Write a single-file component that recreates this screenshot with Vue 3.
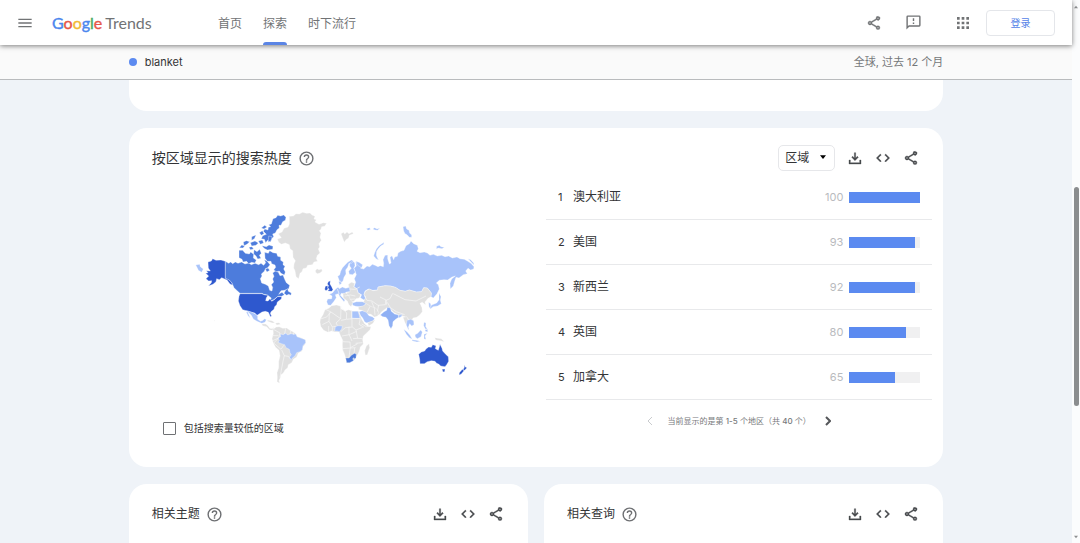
<script setup>
import { ref } from 'vue'

const icons = {
  share: 'M18 16.08c-.76 0-1.44.3-1.96.77L8.91 12.7c.05-.23.09-.46.09-.7s-.04-.47-.09-.7l7.05-4.11A3 3 0 1 0 15 5c0 .24.04.47.09.7L8.04 9.81A3 3 0 1 0 8.04 14.19l7.12 4.16c-.05.21-.08.43-.08.65a2.92 2.92 0 1 0 2.92-2.92zM18 4a1 1 0 1 1 0 2 1 1 0 0 1 0-2zM6 13a1 1 0 1 1 0-2 1 1 0 0 1 0 2zm12 7.02a1 1 0 1 1 0-2 1 1 0 0 1 0 2z',
  feedback: 'M20 2H4a2 2 0 0 0-2 2v18l4-4h14a2 2 0 0 0 2-2V4a2 2 0 0 0-2-2zm0 14H5.2L4 17.2V4h16zM11 12h2v2h-2zm0-6h2v4h-2z',
  apps: 'M3 7h4V3H3zm7 14h4v-4h-4zm-7 0h4v-4H3zm0-7h4v-4H3zm7 0h4v-4h-4zm7-11v4h4V3zm-7 4h4V3h-4zm7 7h4v-4h-4zm0 7h4v-4h-4z',
  menu: 'M2 18.500h20v-2H2zm0-5.500h20v-2H2zm0-7.500v2h20v-2z',
  download: 'M11 4h2v8l2.500-2.500L17 11l-5 5-5-5 1.500-1.500L11 12zM3 15h2v4h14v-4h2v6H3z',
  code: 'M9.400 16.600 4.800 12l4.600-4.600L8 6l-6 6 6 6zm5.200 0 4.600-4.600-4.600-4.600L16 6l6 6-6 6z',
  help: 'M11 18h2v-2h-2zm1-16a10 10 0 1 0 0 20 10 10 0 0 0 0-20zm0 18a8 8 0 1 1 0-16 8 8 0 0 1 0 16zm0-14a4 4 0 0 0-4 4h2a2 2 0 1 1 4 0c0 2-3 1.750-3 5h2c0-2.250 3-2.500 3-5a4 4 0 0 0-4-4z',
}
const nav = ['首页', '探索', '时下流行']
const actions = [
  ['download', '下载'],
  ['code', '嵌入'],
  ['share', '分享'],
]
const regions = [
  ['澳大利亚', 100],
  ['美国', 93],
  ['新西兰', 92],
  ['英国', 80],
  ['加拿大', 65],
]
const related = ['相关主题', '相关查询']
const lowVolume = ref(false)
const area = ref('区域')
</script>

<template>
  <div class="page">
    <div class="view">
      <header class="top">
        <button class="icon-btn" aria-label="菜单"><svg class="ic" viewBox="0 0 24 24"><path :d="icons.menu" /></svg></button>
        <a href="#" class="logo"><span class="google"><span class="b">G</span><span class="r">o</span><span class="y">o</span><span class="b">g</span><span class="g">l</span><span class="r">e</span></span><span>Trends</span></a>
        <nav>
          <a v-for="(n, i) in nav" :key="n" href="#" :class="{ active: i === 1 }">{{ n }}</a>
        </nav>
        <div class="tools">
          <button class="icon-btn" aria-label="分享"><svg class="ic bold" viewBox="0 0 24 24"><path :d="icons.share" /></svg></button>
          <button class="icon-btn" aria-label="反馈"><svg class="ic wide" viewBox="0 0 24 24"><path :d="icons.feedback" /></svg></button>
          <button class="icon-btn apps" aria-label="应用"><svg class="ic" viewBox="0 0 24 24"><path :d="icons.apps" /></svg></button>
          <button class="login">登录</button>
        </div>
      </header>
      <div class="sub">
        <div class="wrap sub-row">
          <span class="term"><i class="dot"></i>blanket</span>
          <span class="scope">全球, 过去 12 个月</span>
        </div>
      </div>
      <main class="wrap">
        <section class="card tail"></section>
        <section class="card geo">
          <div class="head">
            <h2 class="main-title">按区域显示的搜索热度</h2>
            <button class="icon-btn help" aria-label="帮助"><svg class="ic wide" viewBox="0 0 24 24"><path :d="icons.help" /></svg></button>
            <div class="actions">
              <label class="picker">
                <select v-model="area" aria-label="区域"><option>区域</option></select>
                <svg viewBox="0 0 8 5"><path d="M0 0h8L4 5z" /></svg>
              </label>
              <button v-for="a in actions" :key="a[0]" class="icon-btn" :aria-label="a[1]"><svg class="ic bold" viewBox="0 0 24 24"><path :d="icons[a[0]]" /></svg></button>
            </div>
          </div>
          <div class="body">
            <div class="left">
              <svg class="map" viewBox="0 0 870 570" role="img" aria-label="地图">
                <g class="land">
                  <path class="none" d="M298 49l12-1 8-7 10 1 10-5 12 3 10-1 6 6 9 4-3 8 7 2-4 7 12 7 13-5 10 2-6 9-9 1-2 8-5 4 5 8-3 12 4 9-7 10 2 10-4 6 5 12-8 7-3 10 4 8-11 2-5 8-14 2-4 8-10 2-3 9-6 5-4 16-8-6-3-18-4-8 1-12 4-10-7-10-1-20-8-6-2-12-12-5-12 4-8-6-4-10 12-4-9-12 11-5 6-11 12-4 4-9z" />
                  <path class="none" d="M376 212l5-6 6 3 8-2 2 6-7 6-8 2-5-4z" />
                  <path class="high" d="M54 186l10-3 4-7 10 5 15-1 13 4v50l10 4 8 8 5 10-9-4-9-12-16-7-7 6-8-3-2 9-9 8-14 5 9-10 1-6-9 1-8-7 8-8-9-8 7-2-5-6 12 1-6-9z" />
                  <path class="low" d="M17 195l12-2 2 7 9 7-5 10-10-6-3-7z" />
                  <path class="mid" d="M106 184L116 190 122 186 128 191 136 186 144 190 155 186 165 192 176 189 184 194 195 190 206 194 213 190 221 196 227 188 223 179 231 183 240 194 233 203 226 206 223 214 214 222 216 228 211 236 215 249 226 253 235 258 239 271 246 273 248 262 244 254 251 246 248 237 252 229 248 219 256 213 265 217 270 227 279 225 284 238 289 248 299 256 296 266 283 271 273 272 266 283 276 277 283 284 275 289 264 289 251 299 239 303 244 294 232 285 222 283 215 280H150L140 271 132 263 126 249 118 240 106 235z" />
                  <path class="mid" d="M282 280l5-9 6-5 2 8 9 5-1 7-7-3-6 3z" />
                  <path class="mid" d="M249 56L258 53 263 46 272 48 281 45 288 52 286 61 278 65 273 76 267 76 268 84 261 89 256 99 248 102 251 110 244 117 242 126 233 121 227 128 223 118 214 116 218 107 229 103 220 94 224 87 234 90 235 82 242 80 236 74 244 72z" />
                  <path class="mid" d="M224 157L235 160 239 152 249 158 260 160 263 169 272 171 272 181 280 186 279 194 285 199 281 207 286 216 283 225 273 220 268 213 260 215 251 210 257 202 255 195 245 191 243 184 232 184 225 175z" />
                  <path class="mid" d="M147 151l11 0 8 9 12 2 4-6 9 7-1 11 9 6-4 9-10-2-9 4-6-7-11 2-3-8-9-5zM192 149l9 6 8-7 5 12-6 6 5 9-10 2-5-9-7-6zM216 137l13 3 8-5 12 4-1 9-16 2-10-5zM160 126l9-4 10 3-8 8-9 4zM181 128l14-5 10 6-7 7-13 2zM185 110l13-5-5 11-8 5zM208 98l9-6 5 9-8 5zM205 123l12-3 4 9-10 4zM148 143l7-8 9 3-5 6zM177 142l9-2 5 7-10 2zM214 84l10-8 7 5-9 6zM236 108l10 2-2 11-9 6zM226 208l8-4 5 7-8 5z" />
                  <path class="high" d="M150 281H215L225 285 234 286 229 293 227 302 234 303 240 296 245 304 253 299 263 290 275 290 274 297 262 306 260 314 254 320 252 328 243 335 241 341 245 348 241 350 235 337 226 334 216 336 207 342 201 346 194 339 184 337 172 333 158 329 150 317 145 303 147 289z" />
                  <path class="low" d="M170 332L184 336 195 341 203 348 203 358 212 364 219 361 224 356 229 359 225 367 215 370 201 364 190 357 184 346zM172 334l4 9 5 12-7-8-5-10z" />
                  <path class="none" d="M215 371l12 1 7 5 5 8 8 1 5-5-4 10-10-2-8-9-12-3zM232 360l14 2 9 6-8 1-14-5zM256 369l11-1 5 5-12 2z" />
                  <path class="none" d="M249 388L259 381 268 380 278 385 290 384 300 391 309 395 317 401 319 409 335 414 347 421 346 431 339 440 336 453 325 459 320 471 310 478 305 488 295 494 293 503 285 510 280 519 273 524 271 533 267 541 269 550 261 545 262 533 261 518 266 503 266 484 270 468 267 451 256 441 249 427 246 416 250 401z" />
                  <path class="low" d="M263 414L272 410 271 402 280 404 287 399 293 405 303 401 313 403 318 402 321 410 332 414 346 419 347 428 339 437 337 449 330 455 320 458 315 468 307 474 304 480 297 474 304 464 300 458 298 448 288 443 284 434 274 431 264 427 268 421z" />
                  <path class="border" d="M252 389l18 10-4 15-18 8M266 414l-15 15 22 19 8-12M275 450l8 17-4 17-9 48M282 467l13 2 7 8M246 407l19 0M287 385l-3 17M302 393l-2 9M311 397l-1 7" />
                  <path class="none" d="M72 362l3-1-1 3z" />
                </g>
                <g class="land" transform="translate(360 0)">
                  <path class="none" d="M93 101l8-4 3 5 7-6 6 5 10-5 3 5-12 5-2 8-8 5-5 8-4-10z" />
                  <path class="low" d="M169 86l9-3 4 5-8 3zM188 87l6-4 7 4 9-3-7 7-8-1zM279 80L287 78 290 87 297 91 299 99 305 105 305 112 298 112 291 104 285 101 281 93zM222 127L221 133 212 138 205 146 200 154 199 166 202 173 206 180 199 177 191 168 194 158 199 147 207 137zM380 139l8-3 5 4 10 2-7 4-10-2-7 2zM474 176l8 3 9 10 1 6-9-9z" />
                  <path class="low" d="M132 205L139 198 137 186 144 190 155 197 152 205 161 207 171 198 179 200 187 193 195 196 204 200 211 197 220 200 221 190 219 179 225 166 233 165 233 176 238 192 243 189 240 172 246 167 251 179 254 171 262 169 264 159 272 154 282 151 288 137 298 131 303 123 311 131 322 136 325 146 321 154 330 158 343 156 352 159 360 166 370 163 382 168 395 166 405 170 416 168 427 174 441 171 450 176 463 178 472 183 483 190 492 200 491 207 482 210 474 205 467 213 472 221 460 224 447 234 438 232 434 244 430 258 421 267 420 250 425 237 436 228 426 231 413 240 402 239 388 241 379 249 385 254 388 267 381 281 370 294 363 290 364 279 352 264 341 263 335 275 319 276 298 270 286 274 270 271 256 262 241 258 225 257 204 261 203 270 188 271 175 267 165 273 162 283 168 296 162 300 151 293 155 284 144 278 141 267 132 260 137 247 133 236 139 224z" />
                  <path class="none" d="M115 253L124 247 134 250 131 260 141 267 144 278 152 284 148 294 138 296 132 304 121 307 114 297 107 290 111 279 108 268 117 265z" />
                  <path class="low" d="M83 229L89 225 92 214 97 204 105 195 113 187 124 180 131 183 125 190 117 190 113 202 107 210 108 222 102 232 99 243 93 248 88 242zM119 190L127 183 134 188 135 197 131 205 136 217 128 224 118 223 116 214 124 205 119 198zM137 184l10 3 11 7-3 9-12-7zM86 245l6-2 3 7-6 5z" />
                  <path class="low" d="M77 267L84 262 88 266 97 261 107 265 119 262 120 275 109 276 103 282 94 280 91 286 98 293 105 300 102 305 90 291 85 281 76 284 79 293 74 301 71 305 62 316 54 315 50 305 53 297 65 296 66 288 58 283 67 279z" />
                  <path class="none" d="M99 280l9-1 8 7 5 12 8 10-6 12-7-7-4-10-12-9z" />
                  <path class="high" d="M55 245l6-3-1 10 5 8 4 9-4 5-12-1 5-6-6-3 4-7-4-5zM46 259l7-2 1 10-6 5-4-4z" />
                  <path class="none" d="M163 301L167 291 162 283 167 273 178 267 189 272 203 270 204 261 225 257 241 258 256 262 270 271 286 274 298 270 319 276 335 275 341 263 352 264 364 279 363 290 354 295 345 306 347 315 337 307 330 310 336 323 337 335 329 345 320 352 309 354 305 364 297 359 289 352 279 349 264 344 250 337 239 324 229 325 215 335 207 345 194 347 180 336 168 334 160 324 150 318 157 312z" />
                  <path class="low" d="M127 309l12-4 18 0 10 5-4 8-14 2-12-1-9-3z" />
                  <path class="none" d="M145 321l14-3 10-7 13 8 15 5 9 11-3 13-10 3-10-8-13-2-14-10-10-2z" />
                  <path class="low" d="M147 335l10-3 12 5 8 10 10 3 7 6-6 8-17 5-7-3-6-12-7-8z" />
                  <path class="none" d="M173 368l12-4 10-5-6 11-13 8z" />
                  <path class="mid2" d="M211 345L222 335 230 331 232 322 241 324 244 334 254 342 264 344 267 351 257 358 249 365 248 377 243 386 237 377 234 360 228 352 218 350z" />
                  <path class="low" d="M265 346l12-3-3 7-8 4z" />
                  <path class="none" d="M279 352l11-2 7 11 11-1 4 10-6 7-4-9-7-1-2 14-8-13z" />
                  <path class="low" d="M291 361l11-3 9 4 1 12-7 4-6-7-4 11 3 10-5-7-4-10zM281 388l10 7 9 11 7 12-9-5-9-10zM306 419l13 2 12 3-10 2-15-4zM315 404l8-4 9-10 5 6-4 14-11 6-6-5zM342 403l10-3-7 8 3 10-6-1zM342 367l6 2-1 11 5 6-6 1-5-10zM345 389l8-1 0 8-7-2z" />
                  <path class="low" d="M387 279L393 290 391 301 394 311 383 318 369 320 362 326 358 323 365 315 380 309 387 299zM356 307l6 4 1 11-6 1z" />
                  <path class="none" d="M374 413l10 2 10 1 9 9-12-3-14-2z" />
                  <path class="high" d="M326 463L334 456 344 453 348 447 356 441 364 442 368 434 378 437 376 446 385 451 388 441 390 433 396 445 398 453 407 463 415 470 416 484 410 494 405 500 392 498 386 492 380 490 375 484 364 482 352 485 343 491 330 491 329 478zM396 508l9-1-1 8-5 1z" />
                  <path class="high" d="M463 494l3 7 5 2-7 8-5-1 4-8zM457 508l5 4-8 10-7 3 1-7z" />
                  <path class="none" d="M31 357L39 344 45 329 56 325 65 317 79 315 91 318 93 326 105 333 116 329 127 333 145 333 150 345 155 358 164 371 172 378 183 380 180 389 170 399 160 408 158 419 160 432 151 441 148 453 144 462 136 472 128 481 116 488 110 489 107 475 103 461 98 450 97 434 98 421 91 406 87 396 75 396 65 393 54 397 41 391 32 379 30 367z" />
                  <path class="none" d="M177 431l2 12-7 21-6 2-2-14 5-14z" />
                  <path class="low" d="M126 334h18l3 9 3 12h-24zM76 380l8-3 13 1-2 9-7 8-7-2-7 1z" />
                  <path class="mid" d="M107 474L117 474 124 466 134 460 139 463 138 473 129 483 119 488 110 488z" />
                  <path class="none" d="M128 476l4-3 2 5-4 2z" />
                  <path class="border" d="M45 327l18 9-13 15-19 6M63 336l29 20-14 13 4 7M93 318l-1 38M98 326l12 13-1 19-16 3M125 330v25l26 1M110 358l16-2v24l12 10 20-8M92 395l14-12 20-2M96 408l22-4 22-10M117 380v23l9 20M98 425l22 1 1 17 22-12M97 446l40-3M121 443l-4 28M137 430l20-2M138 390l5 25 15 1M151 356l-4 17 15 9M37 374l20-10 10 17 10-2M57 364l1-27M56 378v18M67 382v13M143 415l-14 1M134 444l-2 16M155 372l14 8 12-1" />
                  <path class="border" d="M248 280l-8 16-12 5 2 13M250 281l35 18 33 4 30-15M210 291l18 9-2 14-22 2-18-13-15-2-8-14M185 305l8 19 2 22M206 315l-4 20M180 319l-9 18M232 307l9 16 18 12 25 9M104 288l17-3 15 3M118 267l18 1 13-7M121 298l15-1M118 276l-8 2M82 267l5 13-8 9" />
                </g>
              </svg>
              <label class="check"><input v-model="lowVolume" type="checkbox" />包括搜索量较低的区域</label>
            </div>
            <div class="right">
              <ol>
                <li v-for="(r, i) in regions" :key="r[0]">
                  <span class="rank">{{ i + 1 }}</span><span class="name">{{ r[0] }}</span>
                  <span class="value">{{ r[1] }}</span>
                  <span class="bar"><i :style="{ width: r[1] + '%' }"></i></span>
                </li>
              </ol>
              <div class="pager">
                <button class="icon-btn" aria-label="上一页" disabled><svg viewBox="0 0 6 10"><path d="M5 1 1 5l4 4" /></svg></button>
                <span>当前显示的是第 <b>1-5</b> 个地区（共 <b>40</b> 个）</span>
                <button class="icon-btn" aria-label="下一页"><svg viewBox="0 0 6 10"><path d="m1 1 4 4-4 4" /></svg></button>
              </div>
            </div>
          </div>
        </section>
        <div class="pair">
          <section v-for="t in related" :key="t" class="card">
            <div class="head">
              <h2>{{ t }}</h2>
              <button class="icon-btn help" aria-label="帮助"><svg class="ic wide" viewBox="0 0 24 24"><path :d="icons.help" /></svg></button>
              <div class="actions">
                <button v-for="a in actions" :key="a[0]" class="icon-btn" :aria-label="a[1]"><svg class="ic bold" viewBox="0 0 24 24"><path :d="icons[a[0]]" /></svg></button>
              </div>
            </div>
          </section>
        </div>
      </main>
    </div>
    <div class="scroll" aria-hidden="true">
      <svg viewBox="0 0 6 4"><path d="M0 4h6L3 0z" /></svg>
      <div class="track"><i></i></div>
      <svg viewBox="0 0 6 4"><path d="M0 0h6L3 4z" /></svg>
    </div>
  </div>
</template>

<style>
body { margin: 0; overflow: hidden; }
</style>

<style scoped>
* { box-sizing: border-box; }
.page {
  display: flex;
  height: 100vh;
  overflow: hidden;
  background: #eff3f8;
  color: #333436;
  font: 12px/16px Inter, "Noto Sans CJK SC", sans-serif;
}
.view { flex: 1; min-width: 0; }
.icon-btn {
  display: inline-flex;
  align-items: center;
  justify-content: center;
  padding: 0;
  border: 0;
  background: none;
  color: inherit;
}
.ic { width: 16px; height: 16px; fill: currentColor; }
.bold { stroke: currentColor; stroke-width: 0.5; }
.wide { width: 17px; height: 17px; }
a { color: inherit; text-decoration: none; }
.top {
  position: relative;
  display: flex;
  align-items: center;
  height: 45px;
  padding: 0 17px;
  background: #fff;
  color: #717375;
  box-shadow: 0 1px 5px rgba(0, 0, 0, 0.5);
}
.logo {
  display: flex;
  gap: 3px;
  margin-left: 19px;
  width: 166px;
  font: 16px/20px Lato, sans-serif;
}
.google { -webkit-text-stroke: 0.4px; }
.b { color: #4b86ee; }
.r { color: #e65747; }
.y { color: #f2bb35; }
.g { color: #4aab62; }
nav { display: flex; gap: 21px; align-self: stretch; }
nav a { display: flex; align-items: center; padding-top: 2px; }
nav .active { position: relative; }
nav .active::after {
  content: "";
  position: absolute;
  left: 0;
  right: 0;
  bottom: 0;
  height: 3px;
  border-radius: 3px 3px 0 0;
  background: #5b85e5;
}
.tools { display: flex; align-items: center; gap: 23px; margin-left: auto; }
.apps { margin-left: 10px; }
.login {
  width: 69px;
  height: 26px;
  margin-left: -8px;
  border: 1px solid #e4e6ea;
  border-radius: 4px;
  background: #fff;
  color: #5583e8;
  font: 10px/14px Inter, "Noto Sans CJK SC", sans-serif;
}
.sub {
  height: 35px;
  background: #fafafa;
  border-bottom: 1px solid #b9bbbd;
}
.wrap { width: 76%; margin: 0 auto; }
.sub-row { display: flex; align-items: center; justify-content: space-between; height: 34px; }
.term { display: flex; align-items: center; gap: 8px; font-size: 11px; }
.dot { width: 8px; height: 8px; border-radius: 50%; background: #5c8af0; }
.scope { color: #757779; font-size: 11px; }
.card { background: #fff; border-radius: 18px; }
.tail { height: 31px; border-radius: 0 0 18px 18px; }
.geo { margin: 17px 0; padding-bottom: 25px; }
.head { display: flex; align-items: center; height: 60px; padding: 0 24px 0 23px; }
h2 { margin: 0; font-size: 12px; font-weight: 400; line-height: 20px; }
.main-title { font-size: 14px; }
.help { margin-left: 6px; color: #6d6f72; }
.actions { display: flex; align-items: center; gap: 12px; margin-left: auto; color: #47494c; }
.picker { position: relative; display: block; width: 57px; height: 26px; }
.picker select {
  width: 100%;
  height: 100%;
  padding: 0 6px;
  appearance: none;
  border: 1px solid #e6e7ea;
  border-radius: 5px;
  background: #fff;
  color: #333436;
  font: 12px/16px Inter, "Noto Sans CJK SC", sans-serif;
}
.picker svg { position: absolute; right: 9px; top: 10px; width: 6px; height: 4px; pointer-events: none; }
.body { display: grid; grid-template-columns: 417fr 386fr; padding-right: 11px; }
.geo .body { margin-top: -13px; }
.left { padding: 25px 0 0 34px; }
.map { display: block; width: 290px; height: 190px; margin-left: 27px; }
.land path { stroke: #fff; stroke-width: 1; stroke-linejoin: round; }
.land .none { fill: #e0e0e0; }
.land .low { fill: #a8c3fa; }
.land .mid2 { fill: #8fb0f4; }
.land .mid { fill: #4d7cdc; }
.land .high { fill: #2e58ce; }
.land .border { fill: none; stroke: #f8f8f8; stroke-width: 2; }
.check { display: flex; align-items: center; gap: 8px; margin-top: 30px; font-size: 10px; }
.check input {
  width: 13px;
  height: 13px;
  margin: 0;
  appearance: none;
  border: 1px solid #6f7174;
  border-radius: 1px;
  background: #fff;
}
.check input:checked { background: #5c8af0; }
ol { margin: 0; padding: 0; list-style: none; }
li {
  display: flex;
  align-items: center;
  height: 45px;
  padding: 0 12px;
  border-bottom: 1px solid #e8e9eb;
}
.rank { width: 15px; font-size: 11px; }
.value { margin-left: auto; color: #b9bbbe; font-size: 11px; }
.bar { width: 71px; height: 11px; margin-left: 6px; background: #f0f0f1; }
.bar i { display: block; height: 100%; background: #5b8af0; }
.pager {
  display: flex;
  align-items: center;
  justify-content: center;
  gap: 14px;
  height: 42px;
  color: #77797c;
  font-size: 8px;
}
.pager b { font-weight: 500; }
.pager svg { width: 6px; height: 10px; fill: none; stroke: #55575a; stroke-width: 2; }
.pager button:disabled svg { stroke: #c9cbce; stroke-width: 1; }
.pair { display: grid; grid-template-columns: 1fr 1fr; gap: 16px; }
.pair .card { height: 340px; }
.scroll {
  display: flex;
  flex-direction: column;
  align-items: center;
  width: 8px;
  padding: 5px 0 4px;
  background: #fbfcfd;
}
.scroll svg { width: 4px; height: 4px; fill: #8d8f91; }
.track { flex: 1; width: 5px; padding-top: 178px; }
.track i { display: block; height: 63%; max-height: 222px; border-radius: 3px; background: #8b8d8f; }
</style>
